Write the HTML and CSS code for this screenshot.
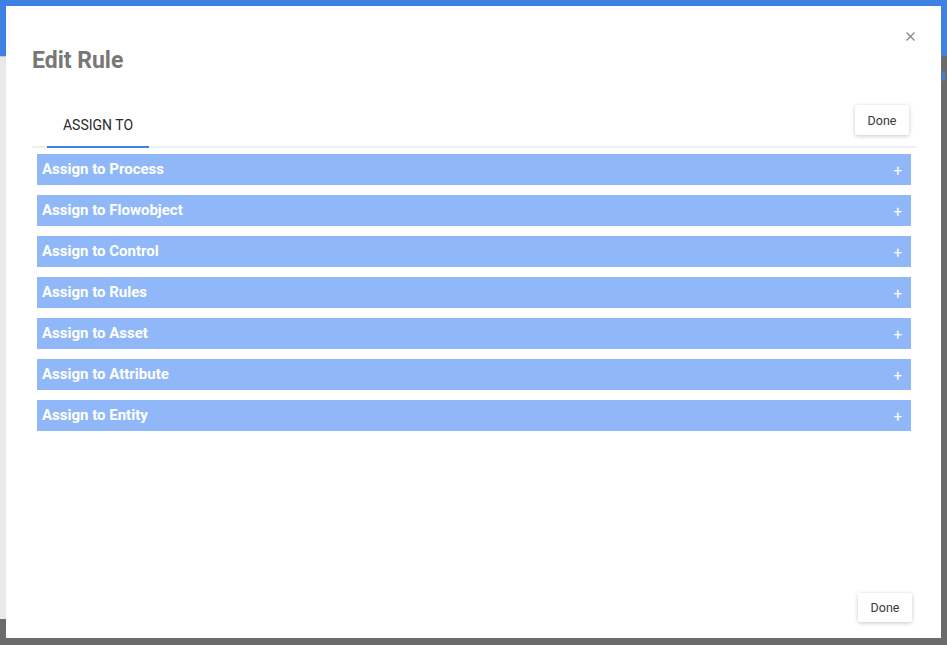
FILE: index.html
```html
<!DOCTYPE html>
<html>
<head>
<meta charset="utf-8">
<title>Edit Rule</title>
<link rel="stylesheet" href="styles.css">
</head>
<body>
<div class="page">
  <header class="topbar"></header>
  <div class="app">
    <aside class="sidebar"></aside>
    <main class="main"><span class="pill"></span></main>
  </div>
</div>

<div class="modal">
  <button class="close" aria-label="Close">
    <svg width="9" height="9" viewBox="0 0 9 9"><path d="M0.5 0.5L8.5 8.5M8.5 0.5L0.5 8.5" stroke="#8a8a8a" stroke-width="1.4" fill="none"/></svg>
  </button>
  <h1 class="title">Edit Rule</h1>
  <div class="tabbar">
    <div class="tab active">ASSIGN TO</div>
    <button class="btn btn-top">Done</button>
  </div>
  <div class="content">
    <div class="row"><span>Assign to Process</span><span class="plus">+</span></div>
    <div class="row"><span>Assign to Flowobject</span><span class="plus">+</span></div>
    <div class="row"><span>Assign to Control</span><span class="plus">+</span></div>
    <div class="row"><span>Assign to Rules</span><span class="plus">+</span></div>
    <div class="row"><span>Assign to Asset</span><span class="plus">+</span></div>
    <div class="row"><span>Assign to Attribute</span><span class="plus">+</span></div>
    <div class="row"><span>Assign to Entity</span><span class="plus">+</span></div>
  </div>
  <div class="footer">
    <button class="btn btn-bottom">Done</button>
  </div>
</div>
</body>
</html>
```

FILE: styles.css
```css
html, body {
  margin: 0;
  padding: 0;
  height: 100%;
}
body {
  background: #6b6b6b;
  font-family: Roboto, "Liberation Sans", Arial, sans-serif;
  overflow: hidden;
}
.page {
  display: flex;
  flex-direction: column;
  height: 100%;
}
.topbar {
  height: 56px;
  background: #3f80e3;
  flex: none;
}
.app {
  display: flex;
  flex: 1;
}
.sidebar {
  width: 200px;
  height: 563px;
  background: linear-gradient(to right, #e9e9e9, #dedede);
  border-top: 1px solid #c8c8c8;
  box-sizing: border-box;
}
.main {
  flex: 1;
  background: #6b6b6b;
  display: flex;
  justify-content: flex-end;
  padding-top: 15px;
  align-items: flex-start;
}
.pill {
  width: 3px;
  height: 10px;
  background: #3f7fe0;
  margin-right: 2px;
  border-radius: 1px;
}

.modal {
  position: fixed;
  left: 6px;
  top: 6px;
  width: 935px;
  height: 632px;
  background: #fff;
  box-sizing: border-box;
  padding: 41px 25px 0 26px;
  display: flex;
  flex-direction: column;
}
.close {
  position: absolute;
  top: 26px;
  right: 26px;
  border: 0;
  background: none;
  padding: 0;
  width: 9px;
  height: 9px;
  display: flex;
  cursor: pointer;
}
.title {
  margin: 0;
  font-size: 23px;
  line-height: 28px;
  font-weight: 700;
  color: #777;
}
.tabbar {
  margin-top: 30px;
  display: flex;
  justify-content: space-between;
  align-items: flex-end;
  border-bottom: 2px solid #efefef;
}
.tab {
  margin-left: 15px;
  width: 102px;
  text-align: center;
  font-size: 14px;
  line-height: 16px;
  color: #2a2a2a;
  padding-bottom: 13px;
  border-bottom: 2px solid #3f80e3;
  margin-bottom: -2px;
}
.btn {
  font-family: inherit;
  border: 0;
  background: #fff;
  color: #3a3a3a;
  font-size: 12.5px;
  border-radius: 2px;
  box-shadow: 0 1px 4px rgba(0, 0, 0, 0.22);
  cursor: pointer;
  padding: 0;
}
.btn-top {
  width: 54px;
  height: 30px;
  margin-right: 7px;
  margin-bottom: 11px;
}
.content {
  flex: 1;
  padding: 6px 5px 0;
  display: flex;
  flex-direction: column;
  gap: 10px;
}
.row {
  height: 31px;
  background: #90b8f8;
  display: flex;
  align-items: center;
  justify-content: space-between;
  padding: 0 9px 2px 5px;
  box-sizing: border-box;
  color: #fff;
  font-size: 15px;
  font-weight: 700;
}
.plus {
  font-weight: 400;
  font-size: 15px;
  padding-top: 4px;
}
.footer {
  display: flex;
  justify-content: flex-end;
  padding: 0 4px 16px 0;
}
.btn-bottom {
  width: 54px;
  height: 29px;
}
```
